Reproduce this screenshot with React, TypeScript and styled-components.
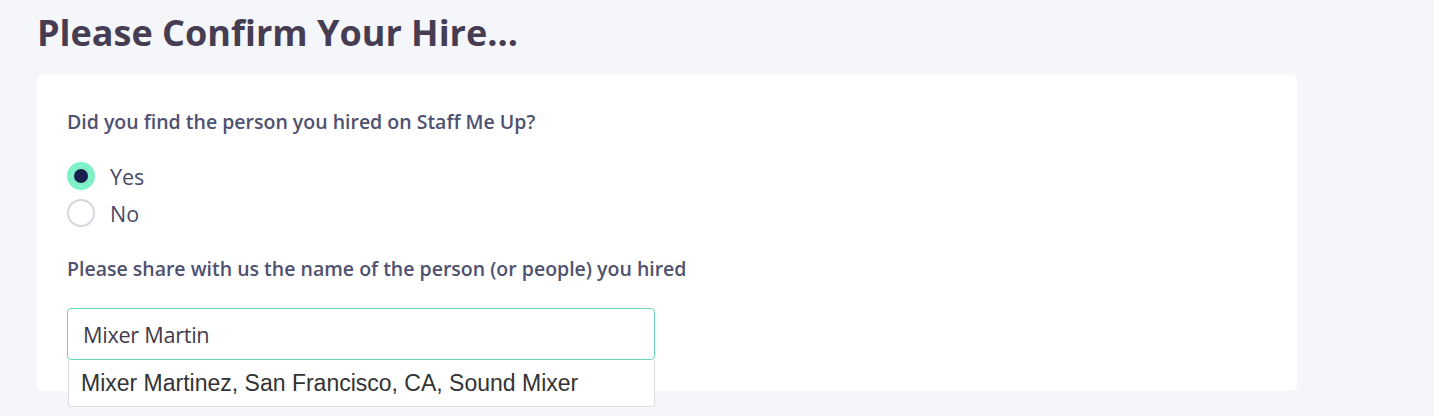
import React from "react";
import styled, { createGlobalStyle } from "styled-components";

const Global = createGlobalStyle`
  html, body { margin: 0; padding: 0; background: #f5f6fa; }
  body { font-family: "Open Sans", sans-serif; }
  * { box-sizing: border-box; }
`;

const Page = styled.div`
  padding: 8px 0 25px 37px;
  width: 1297px;
  min-height: 416px;
`;

const Title = styled.h1`
  margin: 0 0 17px 0;
  font-family: "Open Sans", sans-serif;
  font-weight: 700;
  font-size: 36px;
  line-height: 50px;
  color: #463d52;
`;

const Card = styled.div`
  background: #fff;
  border-radius: 6px;
  padding: 34px 30px 30px;
  height: 316px;
  display: flex;
  flex-direction: column;
`;

const Label = styled.div`
  font-family: "Open Sans", sans-serif;
  font-weight: 600;
  font-size: 19.5px;
  line-height: 26px;
  color: #4f5170;
`;

const RadioGroup = styled.div`
  display: flex;
  flex-direction: column;
  gap: 9px;
  margin-top: 27px;
  margin-bottom: 29px;
`;

const RadioRow = styled.label`
  display: flex;
  align-items: center;
  gap: 15px;
  font-family: "Open Sans", sans-serif;
  font-size: 21.5px;
  color: #4a4a68;
  height: 28px;
`;

const Circle = styled.span<{ $on?: boolean }>`
  width: 28px;
  height: 28px;
  border-radius: 50%;
  display: flex;
  align-items: center;
  justify-content: center;
  background: ${(p) => (p.$on ? "#7ef0c8" : "#fff")};
  border: ${(p) => (p.$on ? "none" : "2px solid #d7d6de")};
`;

const Dot = styled.span`
  width: 14px;
  height: 14px;
  border-radius: 50%;
  background: #1c1f4d;
`;

const Field = styled.div`
  position: relative;
  width: 588px;
  margin-top: 26px;
`;

const Input = styled.div`
  height: 52px;
  border: 1px solid #6ad8b2;
  border-radius: 4px;
  padding: 0 15px;
  display: flex;
  align-items: center;
  font-family: "Open Sans", sans-serif;
  font-size: 21.7px;
  color: #3f3a4a;
  letter-spacing: -0.3px;
`;

const Menu = styled.div`
  position: absolute;
  left: 1px;
  right: 0;
  top: 52px;
  height: 47px;
  background: #fff;
  border: 1px solid #dcdcdf;
  border-top: none;
  border-radius: 0 0 3px 3px;
  padding: 0 12px;
  display: flex;
  align-items: center;
  font-family: "Liberation Sans", Arial, sans-serif;
  font-size: 23px;
  color: #333;
`;

export default function App() {
  return (
    <>
      <Global />
      <Page>
        <Title>Please Confirm Your Hire...</Title>
        <Card>
          <Label>Did you find the person you hired on Staff Me Up?</Label>
          <RadioGroup>
            <RadioRow>
              <Circle $on>
                <Dot />
              </Circle>
              Yes
            </RadioRow>
            <RadioRow>
              <Circle />
              No
            </RadioRow>
          </RadioGroup>
          <Label>Please share with us the name of the person (or people) you hired</Label>
          <Field>
            <Input>Mixer Martin</Input>
            <Menu>Mixer Martinez, San Francisco, CA, Sound Mixer</Menu>
          </Field>
        </Card>
      </Page>
    </>
  );
}
